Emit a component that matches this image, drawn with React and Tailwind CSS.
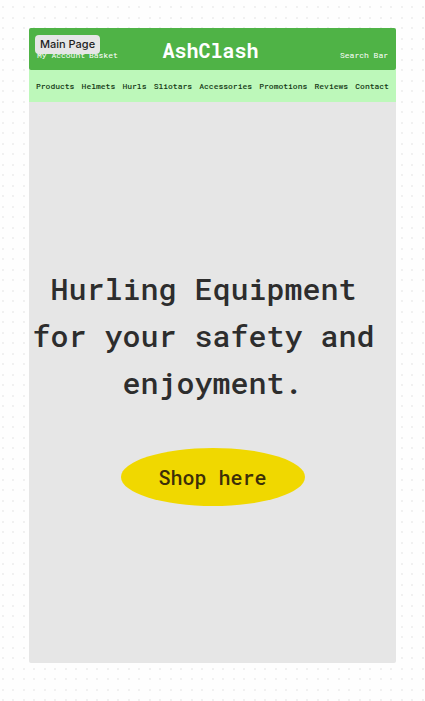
const navItems = [
  'Products',
  'Helmets',
  'Hurls',
  'Sliotars',
  'Accessories',
  'Promotions',
  'Reviews',
  'Contact',
];

const headline = 'Hurling Equipment \nfor your safety and \nenjoyment.';

function Header() {
  return (
    <header className="grid h-[42px] grid-cols-[1fr_auto_1fr] rounded-xs bg-[#4fb346] px-2 text-white">
      <div className="flex gap-1 pt-[21px] text-[8px] leading-3">
        <a href="#account">My Account</a>
        <a href="#basket">Basket</a>
      </div>
      <h1 className="pt-2 pr-1 text-xl leading-7 font-bold">AshClash</h1>
      <div className="pt-[21px] text-[8px] leading-3">
        <input
          type="text"
          aria-label="Search"
          placeholder="Search Bar"
          className="block h-3 w-full bg-transparent text-right outline-none placeholder:text-white"
        />
      </div>
    </header>
  );
}

function Navigation() {
  return (
    <nav className="flex h-8 items-center justify-between bg-[#bdf8ba] px-[7px] text-[8px] leading-3 font-medium text-[#173b17]">
      {navItems.map((item) => (
        <a key={item} href={`#${item.toLowerCase()}`}>
          {item}
        </a>
      ))}
    </nav>
  );
}

export default function App() {
  return (
    <div className="min-h-screen bg-[#fefefe] bg-[radial-gradient(circle_at_3px_7px,#e6e6e6_0.5px,transparent_1px),radial-gradient(circle_at_13px_7px,#e6e6e6_0.5px,transparent_1px),radial-gradient(circle_at_3px_18px,#e6e6e6_0.5px,transparent_1px),radial-gradient(circle_at_13px_18px,#e6e6e6_0.5px,transparent_1px)] bg-size-[21px_21px] px-[29px] pt-7 pb-[38px] font-['Roboto_Mono','DejaVu_Sans_Mono',monospace]">
      <div className="relative rounded-xs bg-[#e6e6e6]">
        <span className="absolute top-[7px] left-[6px] rounded-sm bg-[#e6e6e6] px-[5px] font-['Inter',sans-serif] text-[11px] leading-[19px] font-medium text-[#1e1e1e]">
          Main Page
        </span>
        <Header />
        <Navigation />
        <main className="flex flex-col items-center pt-[163px] pb-[157px]">
          <h2 className="text-center text-[30px] leading-[47px] font-medium whitespace-pre text-[#2d2d2d]">
            {headline}
          </h2>
          <button
            type="button"
            className="mt-[42px] h-[58px] w-[184px] rounded-[50%] bg-[#f0d800] text-xl font-medium text-[#3d2f08]"
          >
            Shop here
          </button>
        </main>
      </div>
    </div>
  );
}
